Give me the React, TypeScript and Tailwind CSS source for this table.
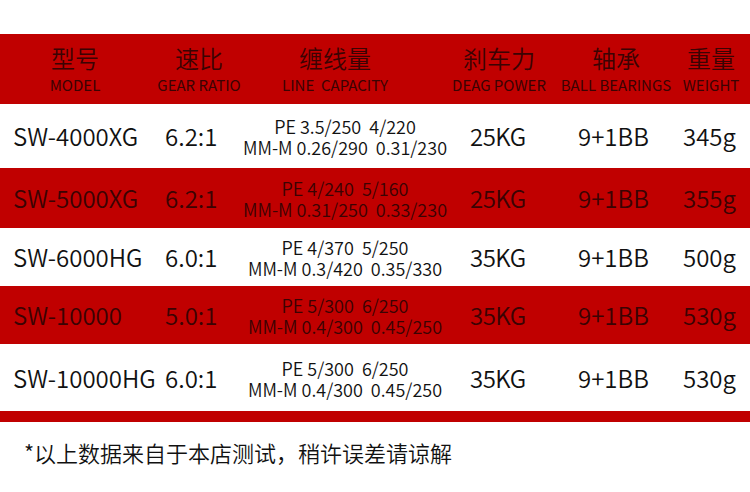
import React from "react";

type Row = { model: string; ratio: string; pe: string; mm: string; drag: string; bb: string; w: string; red: boolean; h: string };

const rows: Row[] = [
  { model: "SW-4000XG", ratio: "6.2:1", pe: "PE 3.5/250\u00a0\u00a04/220", mm: "MM-M 0.26/290\u00a0\u00a00.31/230", drag: "25KG", bb: "9+1BB", w: "345g", red: false, h: "h-[64px]" },
  { model: "SW-5000XG", ratio: "6.2:1", pe: "PE 4/240\u00a0\u00a05/160", mm: "MM-M 0.31/250\u00a0\u00a00.33/230", drag: "25KG", bb: "9+1BB", w: "355g", red: true, h: "h-[60px]" },
  { model: "SW-6000HG", ratio: "6.0:1", pe: "PE 4/370\u00a0\u00a05/250", mm: "MM-M 0.3/420\u00a0\u00a00.35/330", drag: "35KG", bb: "9+1BB", w: "500g", red: false, h: "h-[58px]" },
  { model: "SW-10000", ratio: "5.0:1", pe: "PE 5/300\u00a0\u00a06/250", mm: "MM-M 0.4/300\u00a0\u00a00.45/250", drag: "35KG", bb: "9+1BB", w: "530g", red: true, h: "h-[58px]" },
  { model: "SW-10000HG", ratio: "6.0:1", pe: "PE 5/300\u00a0\u00a06/250", mm: "MM-M 0.4/300\u00a0\u00a00.45/250", drag: "35KG", bb: "9+1BB", w: "530g", red: false, h: "h-[67px]" },
];

function H({ zh, en, w }: { zh: string; en: string; w: string }) {
  return (
    <div className={`${w} shrink-0 flex flex-col items-center pt-[10px]`}>
      <div className="text-[24px] leading-[28px] whitespace-nowrap">{zh}</div>
      <div className="text-[15px] leading-[20px] mt-[3px] whitespace-nowrap font-normal">{en}</div>
    </div>
  );
}

export default function App() {
  return (
    <div
      className="w-[750px] h-[492px] bg-white overflow-hidden flex flex-col font-[350]"
      style={{ fontFamily: '"Noto Sans CJK SC", "Noto Sans", sans-serif' }}
    >
      <div className="h-[34px]" />
      <div className="h-[70px] bg-[#c00000] flex text-[#3a0303] overflow-hidden">
        <H w="w-[150px]" zh="型号" en="MODEL" />
        <H w="w-[98px]" zh="速比" en="GEAR RATIO" />
        <H w="w-[174px]" zh="缠线量" en={"LINE\u00a0\u00a0CAPACITY"} />
        <H w="w-[154px]" zh="刹车力" en="DEAG POWER" />
        <H w="w-[80px]" zh="轴承" en="BALL BEARINGS" />
        <H w="w-[110px]" zh="重量" en="WEIGHT" />
      </div>
      {rows.map((r, i) => (
        <div
          key={i}
          className={`${r.h} flex items-center text-[24px] whitespace-nowrap ${r.red ? "bg-[#c00000] text-[#3a0303]" : "bg-white text-[#111]"}`}
        >
          <div className="w-[165px] pl-[13px]">{r.model}</div>
          <div className="w-[80px]">{r.ratio}</div>
          <div className="w-[200px] flex flex-col items-center text-[18px] leading-[21px] pt-[2px]">
            <div>{r.pe}</div>
            <div>{r.mm}</div>
          </div>
          <div className="w-[133px] pl-[25px] tracking-[-0.5px]">{r.drag}</div>
          <div className="w-[105px]">{r.bb}</div>
          <div>{r.w}</div>
        </div>
      ))}
      <div className="h-[11px] bg-[#c00000]" />
      <div className="pl-[24px] pt-[15px] text-[22px] leading-[30px] text-[#111]">*以上数据来自于本店测试，稍许误差请谅解</div>
    </div>
  );
}
